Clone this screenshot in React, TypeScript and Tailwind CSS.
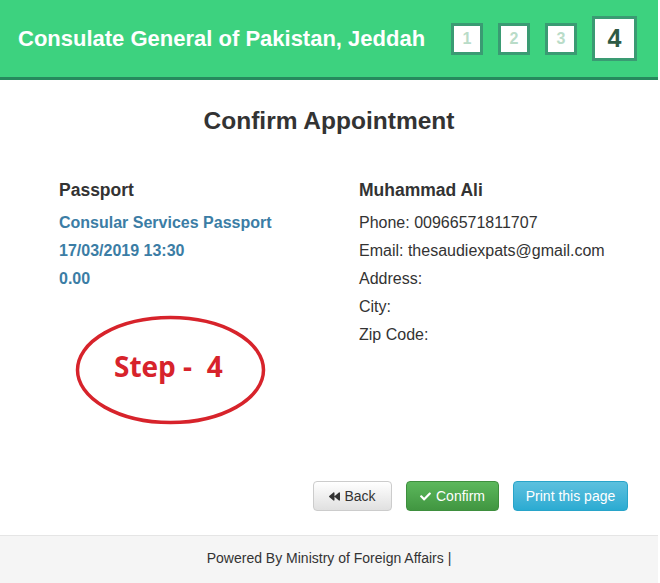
import { FaBackward, FaCheck } from "react-icons/fa";

function StepBox({ n, active }: { n: number; active?: boolean }) {
    if (active) {
        return (
            <div className="w-[45px] h-[45px] bg-white border-[3px] border-[#3a9b73] flex items-center justify-center text-[25px] font-bold text-[#2e5a45]">
                {n}
            </div>
        );
    }
    return (
        <div className="w-[32px] h-[32px] bg-white border-[3px] border-[#3a9b73] flex items-center justify-center text-[16px] font-bold text-[#b9dcc8]">
            {n}
        </div>
    );
}

export default function App() {
    return (
        <div className="w-[658px] h-[583px] bg-white flex flex-col font-['Liberation_Sans',Arial,sans-serif] text-[#333]">
            {/* header */}
            <div className="h-[80px] bg-[#3dd27f] border-b-[3px] border-[#268a5d] flex items-center pl-[18px] pr-[21px]">
                <h1 className="text-[22px] font-bold text-white flex-1">Consulate General of Pakistan, Jeddah</h1>
                <div className="flex items-center gap-[15px]">
                    <StepBox n={1} />
                    <StepBox n={2} />
                    <StepBox n={3} />
                    <StepBox n={4} active />
                </div>
            </div>

            <h2 className="text-[24.5px] font-bold text-center mt-[25px] leading-[32px]">Confirm Appointment</h2>

            <div className="flex mt-[41px] pl-[59px]">
                <div className="w-[300px]">
                    <p className="text-[17.5px] font-bold leading-[24px]">Passport</p>
                    <div className="mt-[7px] text-[16px] font-bold text-[#3b7da5] leading-[28px]">
                        <p>Consular Services Passport</p>
                        <p>17/03/2019 13:30</p>
                        <p>0.00</p>
                    </div>
                    <div className="relative mt-[22px] ml-[16px] w-[191px] h-[110px]">
                        <svg width="191" height="110" viewBox="0 0 191 110" className="absolute inset-0">
                            <ellipse cx="95.5" cy="55" rx="93" ry="52.5" fill="none" stroke="#d7232b" strokeWidth="3.5" />
                        </svg>
                        <span className="absolute left-[39px] top-[33px] text-[28px] font-bold text-[#d7232b] font-['Open_Sans',sans-serif] leading-[36px] whitespace-nowrap">Step -&nbsp; 4</span>
                    </div>
                </div>
                <div>
                    <p className="text-[17.5px] font-bold leading-[24px]">Muhammad Ali</p>
                    <div className="mt-[7px] text-[16px] leading-[28px]">
                        <p>Phone: 00966571811707</p>
                        <p>Email: thesaudiexpats@gmail.com</p>
                        <p>Address:</p>
                        <p>City:</p>
                        <p>Zip Code:</p>
                    </div>
                </div>
            </div>

            <div className="flex-1" />

            <div className="flex justify-end gap-[14px] pr-[30px] mb-[24px] text-[14px]">
                <button className="h-[30px] rounded-[4px] border border-[#ccc] bg-gradient-to-b from-white to-[#e0e0e0] text-[#333] flex items-center gap-[4px] w-[79px] justify-center">
                    <FaBackward className="text-[11px]" /> Back
                </button>
                <button className="h-[30px] rounded-[4px] border border-[#3e8f3e] bg-gradient-to-b from-[#5cb85c] to-[#419641] text-white flex items-center gap-[5px] w-[93px] justify-center">
                    <FaCheck className="text-[11px]" /> Confirm
                </button>
                <button className="h-[30px] rounded-[4px] border border-[#28a4c9] bg-gradient-to-b from-[#5bc0de] to-[#2aabd2] text-white w-[115px] whitespace-nowrap">
                    Print this page
                </button>
            </div>

            <div className="h-[48px] bg-[#f5f5f5] border-t border-[#e5e5e5] flex items-center justify-center pb-[3px] text-[14px] text-[#333]">
                Powered By Ministry of Foreign Affairs |
            </div>
        </div>
    );
}
